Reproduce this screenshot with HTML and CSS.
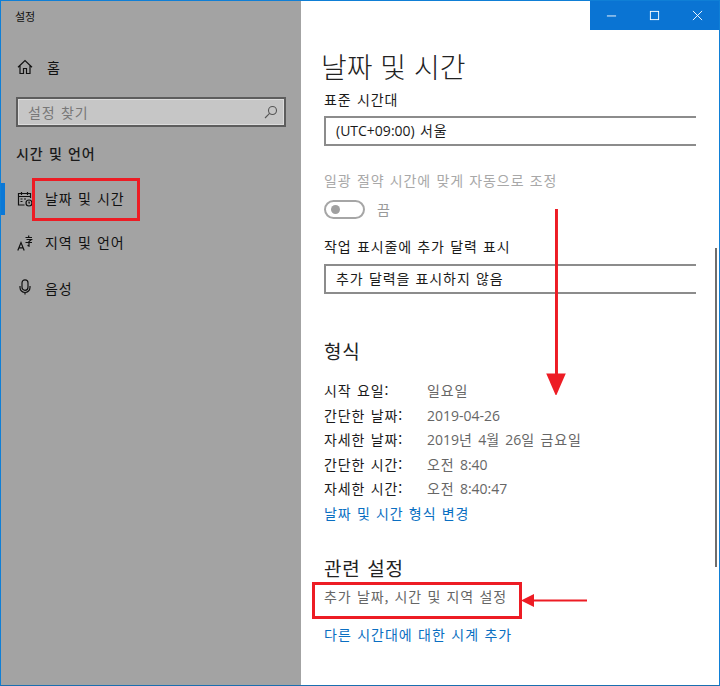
FILE: index.html
```html
<!DOCTYPE html>
<html lang="ko">
<head>
<meta charset="utf-8">
<title>설정</title>
<link rel="stylesheet" href="styles.css">
</head>
<body>
<div class="window">
  <aside class="sidebar">
    <div class="app-title">설정</div>
    <a class="nav home">
      <svg class="icon" viewBox="0 0 16 16"><path d="M1 8.200 8 1.600l7 6.600M3 6.600V14.500h3.500V9.500h3V14.500H13V6.600"/></svg>
      <span>홈</span>
    </a>
    <div class="search">
      <span>설정 찾기</span>
      <svg class="search-icon" viewBox="0 0 14 14"><circle cx="8.500" cy="5.500" r="4"/><path d="M5.600 8.400 1 13"/></svg>
    </div>
    <div class="group-title">시간 및 언어</div>
    <a class="nav item active">
      <svg class="icon" viewBox="0 0 16 16"><path d="M7.500 14H1.500V2.500h12V7M1.500 5.500h12M4.500 1v3M10.500 1v3M3.500 8h2M3.500 10.500h2M7 8h2"/><circle cx="12" cy="12" r="3"/><path d="M12 10.500V12h1"/></svg>
      <span>날짜 및 시간</span>
    </a>
    <a class="nav item">
      <svg class="icon" viewBox="0 0 16 16"><path d="M.8 15.500 4 7.500l3.200 8M2 12.800h4M8.500 2.500h6.500M11.700 .5v2M9.500 4.500h5l-2.200 1.800M8.500 7.500h6.500M12 6v5l-1.500-.6"/></svg>
      <span>지역 및 언어</span>
    </a>
    <a class="nav item">
      <svg class="icon mic" viewBox="0 0 16 16"><rect x="5" y=".8" width="6" height="10.500" rx="3"/><path d="M3 7v1.500a5 5 0 0 0 10 0V7M8 13.500v2"/></svg>
      <span>음성</span>
    </a>
  </aside>
  <main class="content">
    <div class="caption">
      <button class="cap-btn"><svg viewBox="0 0 12 12"><path d="M1 6.500h10"/></svg></button>
      <button class="cap-btn"><svg viewBox="0 0 12 12"><rect x="1.500" y="1.500" width="9" height="9"/></svg></button>
      <button class="cap-btn"><svg viewBox="0 0 12 12"><path d="M1 1l10 10M11 1 1 11"/></svg></button>
    </div>
    <h1 class="page-title">날짜 및 시간</h1>
    <div class="label">표준 시간대</div>
    <div class="select"><span class="num">(UTC+09:00)</span> 서울</div>
    <div class="label disabled dst">일광 절약 시간에 맞게 자동으로 조정</div>
    <div class="toggle-row"><span class="toggle"><i></i></span><span class="toggle-text">끔</span></div>
    <div class="label calendar">작업 표시줄에 추가 달력 표시</div>
    <div class="select">추가 달력을 표시하지 않음</div>
    <h2 class="section format">형식</h2>
    <dl class="facts">
      <dt>시작 요일:</dt><dd>일요일</dd>
      <dt>간단한 날짜:</dt><dd><span class="num">2019-04-26</span></dd>
      <dt>자세한 날짜:</dt><dd><span class="num">2019</span>년 <span class="num">4</span>월 <span class="num">26</span>일 금요일</dd>
      <dt>간단한 시간:</dt><dd>오전 <span class="num">8:40</span></dd>
      <dt>자세한 시간:</dt><dd>오전 <span class="num">8:40:47</span></dd>
    </dl>
    <a class="link">날짜 및 시간 형식 변경</a>
    <h2 class="section related">관련 설정</h2>
    <a class="link grey">추가 날짜, 시간 및 지역 설정</a>
    <a class="link clock">다른 시간대에 대한 시계 추가</a>
    <div class="scrollbar"></div>
  </main>
  <div class="mark mark-nav"></div>
  <div class="mark mark-link"></div>
  <svg class="arrow arrow-down" viewBox="0 0 20 190"><path d="M9 0h3v170H9z"/><path d="M0 168h20l-10 23z"/></svg>
  <svg class="arrow arrow-left" viewBox="0 0 66 14"><path d="M12 5.500h54v2H12z"/><path d="M0 6.500 13 0v13z"/></svg>
</div>
</body>
</html>
```
FILE: styles.css
```css
* { box-sizing: border-box; }
html, body { margin: 0; padding: 0; }
body {
  width: 720px;
  height: 686px;
  overflow: hidden;
  font-family: "Noto Sans CJK KR", "Noto Sans", sans-serif;
  font-size: 14px;
  color: #1a1a1a;
}
.window {
  position: relative;
  display: flex;
  width: 720px;
  height: 686px;
  border: 1px solid #0f7fd6;
  border-bottom-color: #1a6fb0;
  background: #fff;
}
.sidebar {
  flex: 0 0 300px;
  background: #a3a3a3;
  display: flex;
  flex-direction: column;
  color: #111;
}
.app-title {
  font-size: 11px;
  line-height: 16px;
  padding: 7px 0 0 14px;
  height: 30px;
}
.nav {
  display: flex;
  align-items: center;
  height: 44px;
  padding-left: 16px;
  font-size: 14px;
  letter-spacing: .9px;
  word-spacing: .5px;
}
.nav span { margin-left: 12px; }
.nav.home { height: 44px; margin-top: 14px; }
.nav.home span { margin-left: 14px; }
.icon {
  width: 16px;
  height: 16px;
  fill: none;
  stroke: #111;
  stroke-width: 1.200;
}
.search {
  display: flex;
  align-items: center;
  justify-content: space-between;
  height: 30px;
  margin: 8px 15px 0 15px;
  padding: 0 6px 0 10px;
  border: 2px solid #5d5d5d;
  background: #c6c6c6;
  box-shadow: inset 0 0 0 1px #dcdcdc;
  color: #777;
  font-size: 14px;
  letter-spacing: .9px;
  word-spacing: .5px;
}
.search-icon { width: 14px; height: 14px; fill: none; stroke: #555; stroke-width: 1.100; }
.group-title {
  font-size: 14px;
  font-weight: 500;
  line-height: 20px;
  letter-spacing: .9px;
  word-spacing: .5px;
  padding: 16px 0 0 15px;
  height: 50px;
  color: #1a1a1a;
}
.item { height: 44px; }
.item span { position: relative; top: -1px; }
.item:last-child span { top: 1px; }
.active { box-shadow: inset 4px 0 0 #0a78d7; height: 32px; margin: 6px 0; }
.content {
  position: relative;
  flex: 1;
  min-width: 0;
  padding: 0 0 0 23px;
  overflow: hidden;
}
.num { font-family: "Open Sans", sans-serif; letter-spacing: 0; }
.caption {
  position: absolute;
  top: 0;
  right: 0;
  display: flex;
  height: 29px;
  background: #0a74d3;
}
.cap-btn {
  width: 43px;
  height: 29px;
  padding: 0;
  border: 0;
  background: none;
  display: flex;
  align-items: center;
  justify-content: center;
}
.cap-btn svg { width: 11px; height: 11px; fill: none; stroke: #fff; stroke-width: 1; }
.page-title {
  margin: 0 0 0 -3px;
  padding-top: 45px;
  font-size: 28px;
  font-weight: 300;
  line-height: 40px;
  letter-spacing: 0;
  color: #222;
}
.label {
  font-size: 14px;
  line-height: 20px;
  letter-spacing: .9px;
  word-spacing: .5px;
  color: #1a1a1a;
}
.page-title + .label { margin-top: 3px; }
.select {
  height: 30px;
  margin-top: 7px;
  width: 372px;
  padding-left: 10px;
  border: 2px solid #8c8c8c;
  border-right: 0;
  font-size: 14px;
  line-height: 25px;
  letter-spacing: .9px;
  word-spacing: .5px;
  color: #1a1a1a;
}
.disabled { color: #a8a8a8; }
.dst { margin-top: 24px; }
.toggle-row { display: flex; align-items: center; height: 20px; margin-top: 9px; }
.toggle {
  display: flex;
  align-items: center;
  width: 41px;
  height: 19px;
  padding-left: 5px;
  border: 2px solid #a6a6a6;
  border-radius: 10px;
}
.toggle i { width: 9px; height: 9px; border-radius: 50%; background: #a0a0a0; }
.toggle-text { margin-left: 12px; color: #999; font-size: 14px; }
.calendar { margin-top: 17px; }
.calendar + .select { margin-top: 8px; }
.section {
  margin: 0;
  font-size: 19px;
  font-weight: 400;
  line-height: 28px;
  letter-spacing: .8px;
  word-spacing: .5px;
  color: #222;
}
.format { margin-top: 43px; }
.facts {
  display: grid;
  grid-template-columns: 103px 1fr;
  grid-auto-rows: 24.500px;
  margin: 13px 0 0 0;
  line-height: 24px;
  letter-spacing: .9px;
  word-spacing: .5px;
}
.facts dt { color: #1a1a1a; }
.facts dd { margin: 0; color: #666; }
.link {
  display: block;
  color: #0a6fc2;
  font-size: 14px;
  line-height: 24px;
  letter-spacing: .9px;
  word-spacing: .5px;
}
.related { margin-top: 29px; }
.grey { color: #666; margin-top: 2px; }
.clock { margin-top: 14px; letter-spacing: 1px; }
.scrollbar {
  position: absolute;
  right: 2px;
  top: 247px;
  bottom: 118px;
  width: 2px;
  background: #6e6e6e;
}
.mark { position: absolute; border: 3px solid #ed1c24; }
.mark-nav { left: 31px; top: 177px; width: 108px; height: 43px; }
.mark-link { left: 311px; top: 581px; width: 210px; height: 37px; }
.arrow { position: absolute; fill: #ed1c24; }
.arrow-down { left: 545px; top: 208px; width: 20px; height: 186px; }
.arrow-left { left: 520px; top: 593px; width: 66px; height: 14px; }
```
